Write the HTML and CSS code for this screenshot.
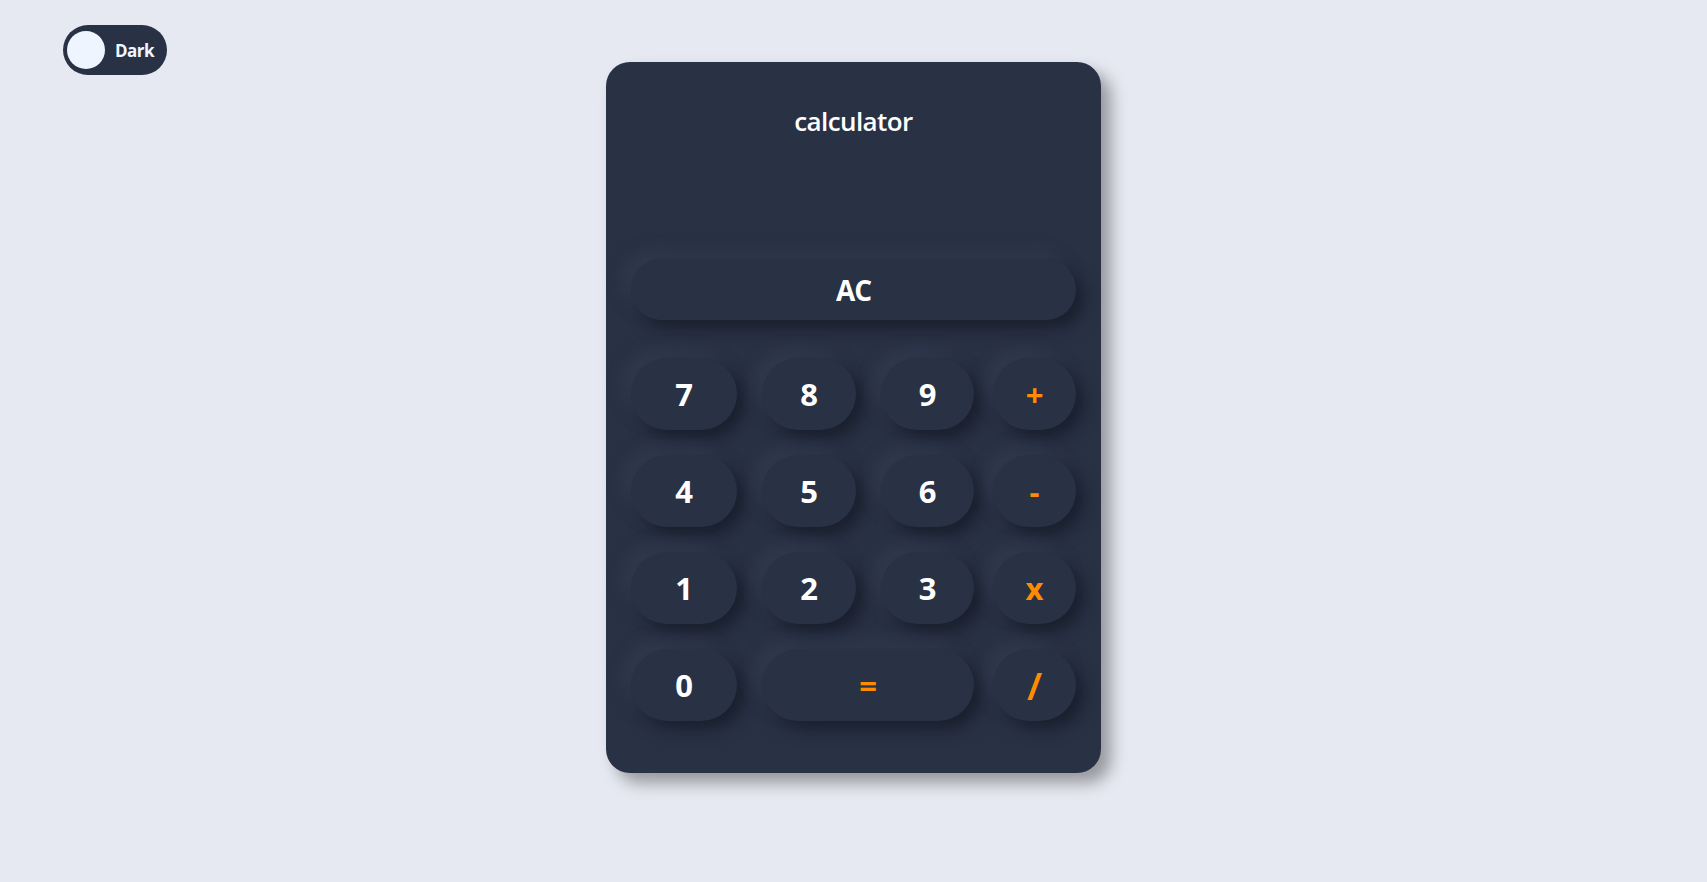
FILE: index.html
```html
<!DOCTYPE html>
<html lang="en">
<head>
<meta charset="utf-8">
<title>calculator</title>
<link rel="stylesheet" href="styles.css">
</head>
<body>
<button class="theme-toggle"><span class="knob"></span><span class="toggle-label">Dark</span></button>
<main class="page">
  <section class="calculator">
    <h1 class="title">calculator</h1>
    <div class="display"></div>
    <button class="key key-clear">AC</button>
    <div class="keypad">
      <button class="key w1">7</button>
      <button class="key w2">8</button>
      <button class="key w3">9</button>
      <button class="key w4 op">+</button>
      <button class="key w1">4</button>
      <button class="key w2">5</button>
      <button class="key w3">6</button>
      <button class="key w4 op">-</button>
      <button class="key w1">1</button>
      <button class="key w2">2</button>
      <button class="key w3">3</button>
      <button class="key w4 op">x</button>
      <button class="key w1">0</button>
      <button class="key equals op">=</button>
      <button class="key w4 op slash">/</button>
    </div>
  </section>
</main>
</body>
</html>
```
FILE: styles.css
```css
* { box-sizing: border-box; }
html, body { margin: 0; padding: 0; }
body {
  background: #e6e9f1;
  font-family: "Open Sans", "Noto Sans", sans-serif;
  min-height: 882px;
}
.theme-toggle {
  position: fixed;
  top: 25px;
  left: 63px;
  width: 104px;
  height: 50px;
  border: none;
  border-radius: 25px;
  background: #293145;
  display: flex;
  align-items: center;
  padding: 0 0 0 4px;
  gap: 10px;
  cursor: pointer;
}
.knob {
  width: 38px;
  height: 38px;
  border-radius: 50%;
  background: #eef5ff;
}
.toggle-label {
  color: #f2f6ff;
  font-family: "Open Sans", sans-serif;
  font-weight: 700;
  font-size: 17px;
  letter-spacing: -0.5px;
}
.page {
  display: flex;
  justify-content: center;
  padding-top: 62px;
}
.calculator {
  width: 495px;
  height: 711px;
  background: #293145;
  border-radius: 24px;
  box-shadow: 10px 10px 16px rgba(0, 0, 0, 0.35);
  padding: 0 25px;
  display: flex;
  flex-direction: column;
}
.title {
  margin: 0;
  padding-top: 41px;
  height: 107px;
  text-align: center;
  color: #ffffff;
  font-family: "Open Sans", sans-serif;
  font-weight: 600;
  font-size: 26px;
  line-height: 36px;
  letter-spacing: -0.6px;
}
.display {
  height: 90px;
}
.key {
  border: none;
  background: #293145;
  color: #ffffff;
  font-family: "Noto Sans", sans-serif;
  font-weight: 700;
  font-size: 31px;
  height: 72px;
  border-radius: 36px;
  box-shadow: 8px 8px 16px rgba(20, 25, 38, 0.75), -8px -8px 16px rgba(60, 68, 90, 0.45);
  padding: 0;
  cursor: pointer;
}
.key-clear {
  width: 445px;
  height: 61px;
  border-radius: 30px;
  font-family: "Open Sans", sans-serif;
  font-weight: 700;
  font-size: 28px;
  letter-spacing: -1px;
}
.keypad {
  margin-top: 38px;
  display: grid;
  grid-template-columns: 131px 119px 112px 83px;
  grid-auto-rows: 72px;
  row-gap: 25px;
}
.w1 { width: 106px; }
.w2 { width: 94px; }
.w3 { width: 93px; }
.w4 { width: 83px; }
.equals {
  grid-column: 2 / span 2;
  width: 212px;
}
.op { color: #ff8c00; }
.slash { font-size: 38px; font-weight: 600; }
```
